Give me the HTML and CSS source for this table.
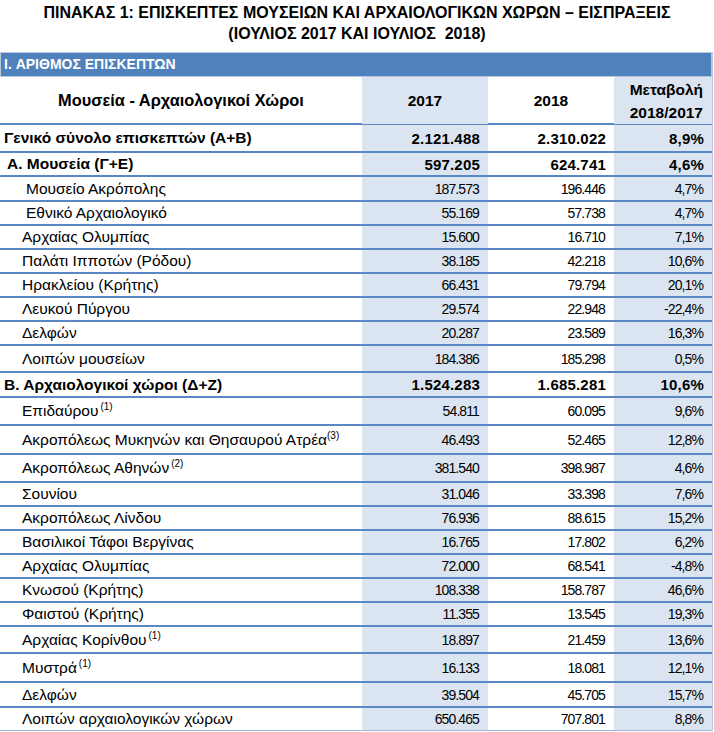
FILE: index.html
```html
<!DOCTYPE html>
<html lang="el">
<head>
<meta charset="utf-8">
<title>Πίνακας 1</title>
<link rel="stylesheet" href="styles.css">
</head>
<body>
<h1 class="title">ΠΙΝΑΚΑΣ 1: ΕΠΙΣΚΕΠΤΕΣ ΜΟΥΣΕΙΩΝ ΚΑΙ ΑΡΧΑΙΟΛΟΓΙΚΩΝ ΧΩΡΩΝ – ΕΙΣΠΡΑΞΕΙΣ<br>(ΙΟΥΛΙΟΣ 2017 ΚΑΙ ΙΟΥΛΙΟΣ &nbsp;2018)</h1>
<div class="table">
  <div class="band">I. ΑΡΙΘΜΟΣ ΕΠΙΣΚΕΠΤΩΝ</div>
  <div class="row head">
    <div class="c name center">Μουσεία - Αρχαιολογικοί Χώροι</div>
    <div class="c shade center">2017</div>
    <div class="c center">2018</div>
    <div class="c shade right two">Μεταβολή<br>2018/2017</div>
  </div>

  <div class="row bold h28"><div class="c name i0">Γενικό σύνολο επισκεπτών (Α+Β)</div><div class="c shade n">2.121.488</div><div class="c n">2.310.022</div><div class="c shade n">8,9%</div></div>
  <div class="row bold h24"><div class="c name i1">Α. Μουσεία (Γ+Ε)</div><div class="c shade n">597.205</div><div class="c n">624.741</div><div class="c shade n">4,6%</div></div>
  <div class="row h25"><div class="c name i3">Μουσείο Ακρόπολης</div><div class="c shade n">187.573</div><div class="c n">196.446</div><div class="c shade n">4,7%</div></div>
  <div class="row h24"><div class="c name i3">Εθνικό Αρχαιολογικό</div><div class="c shade n">55.169</div><div class="c n">57.738</div><div class="c shade n">4,7%</div></div>
  <div class="row h24"><div class="c name i2">Αρχαίας Ολυμπίας</div><div class="c shade n">15.600</div><div class="c n">16.710</div><div class="c shade n">7,1%</div></div>
  <div class="row h24"><div class="c name i2">Παλάτι Ιπποτών (Ρόδου)</div><div class="c shade n">38.185</div><div class="c n">42.218</div><div class="c shade n">10,6%</div></div>
  <div class="row h24"><div class="c name i2">Ηρακλείου (Κρήτης)</div><div class="c shade n">66.431</div><div class="c n">79.794</div><div class="c shade n">20,1%</div></div>
  <div class="row h24"><div class="c name i2">Λευκού Πύργου</div><div class="c shade n">29.574</div><div class="c n">22.948</div><div class="c shade n">-22,4%</div></div>
  <div class="row h24"><div class="c name i2">Δελφών</div><div class="c shade n">20.287</div><div class="c n">23.589</div><div class="c shade n">16,3%</div></div>
  <div class="row h27"><div class="c name i2">Λοιπών μουσείων</div><div class="c shade n">184.386</div><div class="c n">185.298</div><div class="c shade n">0,5%</div></div>

  <div class="row bold h25"><div class="c name i0">Β. Αρχαιολογικοί χώροι (Δ+Ζ)</div><div class="c shade n">1.524.283</div><div class="c n">1.685.281</div><div class="c shade n">10,6%</div></div>
  <div class="row h28"><div class="c name i2">Επιδαύρου <sup>(1)</sup></div><div class="c shade n">54.811</div><div class="c n">60.095</div><div class="c shade n">9,6%</div></div>
  <div class="row h29"><div class="c name i2">Ακροπόλεως Μυκηνών και Θησαυρού Ατρέα<sup class="tight">(3)</sup></div><div class="c shade n">46.493</div><div class="c n">52.465</div><div class="c shade n">12,8%</div></div>
  <div class="row h28"><div class="c name i2">Ακροπόλεως Αθηνών <sup>(2)</sup></div><div class="c shade n">381.540</div><div class="c n">398.987</div><div class="c shade n">4,6%</div></div>
  <div class="row h24"><div class="c name i2">Σουνίου</div><div class="c shade n">31.046</div><div class="c n">33.398</div><div class="c shade n">7,6%</div></div>
  <div class="row h24"><div class="c name i2">Ακροπόλεως Λίνδου</div><div class="c shade n">76.936</div><div class="c n">88.615</div><div class="c shade n">15,2%</div></div>
  <div class="row h24"><div class="c name i2">Βασιλικοί Τάφοι Βεργίνας</div><div class="c shade n">16.765</div><div class="c n">17.802</div><div class="c shade n">6,2%</div></div>
  <div class="row h24"><div class="c name i2">Αρχαίας Ολυμπίας</div><div class="c shade n">72.000</div><div class="c n">68.541</div><div class="c shade n">-4,8%</div></div>
  <div class="row h24"><div class="c name i2">Κνωσού (Κρήτης)</div><div class="c shade n">108.338</div><div class="c n">158.787</div><div class="c shade n">46,6%</div></div>
  <div class="row h24"><div class="c name i2">Φαιστού (Κρήτης)</div><div class="c shade n">11.355</div><div class="c n">13.545</div><div class="c shade n">19,3%</div></div>
  <div class="row h27"><div class="c name i2">Αρχαίας Κορίνθου <sup>(1)</sup></div><div class="c shade n">18.897</div><div class="c n">21.459</div><div class="c shade n">13,6%</div></div>
  <div class="row h29"><div class="c name i2">Μυστρά <sup>(1)</sup></div><div class="c shade n">16.133</div><div class="c n">18.081</div><div class="c shade n">12,1%</div></div>
  <div class="row h25"><div class="c name i2">Δελφών</div><div class="c shade n">39.504</div><div class="c n">45.705</div><div class="c shade n">15,7%</div></div>
  <div class="row h23 last"><div class="c name i2">Λοιπών αρχαιολογικών χώρων</div><div class="c shade n">650.465</div><div class="c n">707.801</div><div class="c shade n">8,8%</div></div>
</div>
</body>
</html>
```

FILE: styles.css
```css
* { box-sizing: border-box; }
html, body { margin: 0; padding: 0; background: #ffffff; }
body {
  font-family: "Liberation Sans", Arial, sans-serif;
  color: #000000;
  width: 714px;
  height: 732px;
  overflow: hidden;
}
.title {
  margin: 2px 0 0 0;
  height: 50px;
  font-size: 16px;
  line-height: 21px;
  font-weight: 700;
  text-align: center;
  letter-spacing: 0;
}
.table {
  width: 713px;
  border-right: 1px solid #b8cbe2;
}
.band {
  height: 25px;
  background: #4f81bd;
  border: 1px solid #b9c9dd;
  color: #ffffff;
  font-weight: 700;
  font-size: 14px;
  line-height: 22px;
  padding-left: 3px;
}
.row {
  display: grid;
  grid-template-columns: 362px 126px 126px 98px;
  border-bottom: 2px solid #5a88c4;
}
.row.head {
  height: 48px;
  font-weight: 700;
  font-size: 15.5px;
}
.row.head .name { font-size: 16.4px; }
.c {
  display: flex;
  align-items: center;
  white-space: nowrap;
}
.shade { background: #dbe5f1; }
.center { justify-content: center; }
.right { justify-content: flex-end; text-align: right; padding-right: 9px; }
.two { line-height: 23px; padding-top: 1px; }
.name { font-size: 15.5px; }
.i0 { padding-left: 4px; }
.i1 { padding-left: 7px; }
.i2 { padding-left: 22px; }
.i3 { padding-left: 26px; }
.n {
  justify-content: flex-end;
  padding-right: 9px;
  font-size: 14px;
  letter-spacing: -0.9px;
}
.bold { font-weight: 700; }
.bold .n { font-size: 15px; letter-spacing: 0.2px; padding-right: 8px; }
.bold .name { font-size: 15.5px; }
sup {
  font-size: 10px;
  line-height: 0;
  position: relative;
  top: -4px;
  vertical-align: super;
  margin-left: 2px;
}
sup.tight { margin-left: 0; }
.h23 { height: 23px; }
.h24 { height: 24px; }
.h25 { height: 25px; }
.h27 { height: 27px; }
.h28 { height: 28px; }
.h29 { height: 29px; }
.last { border-bottom: 1px solid #9fb9da; }
```
